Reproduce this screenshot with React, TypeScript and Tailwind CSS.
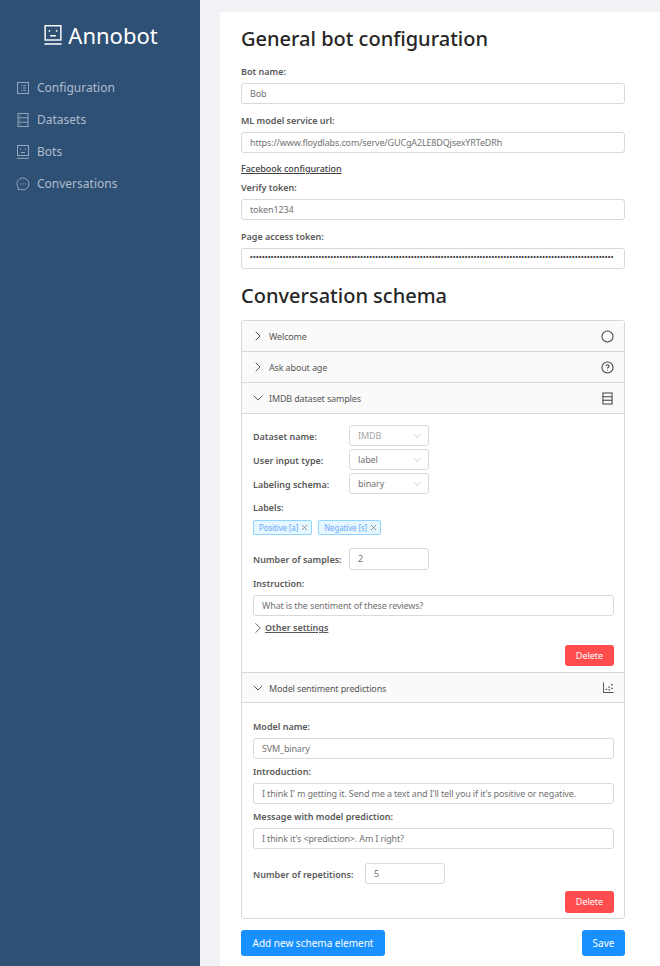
import { ReactNode } from 'react';
import { ChevronDown, ChevronRight, X } from 'lucide-react';

const font = `[font-family:'Noto_Sans',sans-serif]`;

const ConfigIcon = ({ className }: { className?: string }) => (
    <svg viewBox="0 0 14 14" fill="none" stroke="currentColor" strokeWidth="1" className={className}>
        <rect x="1.5" y="1.5" width="11" height="11" />
        <path d="M5 4.500h.8M5 7h.8M5 9.500h.8M7 4.500h3M7 7h3M7 9.500h3" />
    </svg>
);

const DatasetIcon = ({ className }: { className?: string }) => (
    <svg viewBox="0 0 14 14" fill="none" stroke="currentColor" strokeWidth="1" className={className}>
        <rect x="2" y="0.500" width="10" height="13" />
        <path d="M2 4.800h10M2 9.200h10M3.500 2.700h1M3.500 7h1M3.500 11.300h1" />
    </svg>
);

const BotIcon = ({ className }: { className?: string }) => (
    <svg viewBox="0 0 14 14" fill="none" stroke="currentColor" strokeWidth="1" className={className}>
        <rect x="1.500" y="0.500" width="11" height="10" />
        <path d="M1 13.300h12M5 7.500h4M4.500 3.500v1.200M9.500 3.500v1.200" />
    </svg>
);

const ChatIcon = ({ className }: { className?: string }) => (
    <svg viewBox="0 0 14 14" fill="none" stroke="currentColor" strokeWidth="1" className={className}>
        <path d="M7 1C3.700 1 1 3.500 1 6.800c0 1.500.5 2.800 1.400 3.800l-.4 2.400 2.500-.8c.8.4 1.600.6 2.500.6 3.300 0 6-2.700 6-6S10.300 1 7 1z" />
        <path d="M4.200 7h1M6.500 7h1M8.800 7h1" />
    </svg>
);

const HelpIcon = () => (
    <svg viewBox="0 0 14 14" fill="none" stroke="currentColor" strokeWidth="1.100" className="w-[13px] h-[13px]">
        <circle cx="7" cy="7" r="6" />
        <path d="M5.300 5.600C5.300 4.600 6 4 7 4s1.700.6 1.700 1.500c0 1.200-1.700 1.300-1.700 2.700M7 9.300v1" />
    </svg>
);

const RingIcon = () => (
    <svg viewBox="0 0 14 14" fill="none" stroke="currentColor" strokeWidth="1.100" className="w-[13px] h-[13px]">
        <circle cx="7" cy="7" r="6" />
    </svg>
);

const RowsIcon = () => (
    <svg viewBox="0 0 12 14" fill="none" stroke="currentColor" strokeWidth="1.100" className="w-[11px] h-[13px] mr-[1px]">
        <rect x="1" y="1" width="10" height="12" />
        <path d="M1 5h10M1 9h10" />
    </svg>
);

const ScatterIcon = () => (
    <svg viewBox="0 0 12 12" fill="none" stroke="currentColor" strokeWidth="1" className="w-[11px] h-[11px]">
        <path d="M.5 .5v11h11" />
        <path d="M3 8h1.500M6 5.500h1.500M6 8.500h1.500M9 3h1.500M9 7h1.500" strokeWidth="1.400" />
    </svg>
);

const Field = ({ value, className = 'text-[9px] tracking-[-0.15px]' }: { value: string; className?: string }) => (
    <div
        className={`h-[21px] px-2 flex items-center bg-white border border-[#d9d9d9] rounded-[3px] text-[#737373] whitespace-nowrap overflow-hidden ${className}`}
    >
        {value}
    </div>
);

// taller line box with a negative margin: the text sits 1px lower without changing the flow height
const Label = ({ children, className = '' }: { children: ReactNode; className?: string }) => (
    <div className={`text-[9px] leading-[16px] -mb-[2px] font-semibold text-[#595959] whitespace-nowrap ${className}`}>{children}</div>
);

const Select = ({ value, dim }: { value: string; dim?: boolean }) => (
    <div className="w-20 h-[21px] pl-2 pr-[5px] flex items-center justify-between border border-[#d9d9d9] rounded-[3px] text-[9px] tracking-[-0.1px]">
        <span className={dim ? 'text-[#a6a6a6]' : 'text-[#737373]'}>{value}</span>
        <ChevronDown className="w-3 h-3 text-[#bfbfbf]" strokeWidth={1.5} />
    </div>
);

const InlineRow = ({ label, children, className = '' }: { label: string; children: ReactNode; className?: string }) => (
    <div className={`flex items-center justify-between ${className}`}>
        <Label>{label}</Label>
        {children}
    </div>
);

const Header = ({
    title,
    open,
    icon,
    className = '',
}: {
    title: string;
    open?: boolean;
    icon: ReactNode;
    className?: string;
}) => (
    <div className={`h-[31px] flex items-center pl-[8px] pr-[10px] bg-[#fafafa] border-b border-[#d9d9d9] ${className}`}>
        {open ? (
            <ChevronDown className="w-4 h-4 text-[#595959]" strokeWidth={1.5} />
        ) : (
            <ChevronRight className="w-4 h-4 text-[#595959]" strokeWidth={1.5} />
        )}
        <span className="ml-[3px] pt-[2px] text-[9px] tracking-[-0.15px] text-[#595959]">{title}</span>
        <span className="ml-auto text-[#3f3f3f] flex">{icon}</span>
    </div>
);

const Tag = ({ text }: { text: string }) => (
    <span className="h-[15px] pl-[5px] pr-[2px] flex items-center gap-[2px] bg-[#e6f7ff] border border-[#91d5ff] rounded-[2px] text-[8px] tracking-[-0.15px] text-[#6fa8ff]">
        {text}
        <X className="w-[9px] h-[9px] text-[#777777]" strokeWidth={2} />
    </span>
);

const DeleteButton = ({ className = '' }: { className?: string }) => (
    <div className={`flex justify-end ${className}`}>
        <button className="w-[49px] h-full bg-[#ff4d4f] rounded-[3px] text-[9px] text-white">Delete</button>
    </div>
);

const navItems = [
    { text: 'Configuration', icon: ConfigIcon },
    { text: 'Datasets', icon: DatasetIcon },
    { text: 'Bots', icon: BotIcon },
    { text: 'Conversations', icon: ChatIcon },
];

export default function App() {
    return (
        <div className={`${font} h-[966px] overflow-hidden flex bg-[#f0f2f5]`}>
            <aside className="w-[200px] shrink-0 bg-[#2e5075]">
                <div className="pt-[19px] h-[72px] flex justify-center items-start gap-[5px] text-white">
                    <BotIcon className="w-5 h-5 mt-[6px] ml-[1px]" />
                    <span className="text-[22px] leading-[32px] font-normal">Annobot</span>
                </div>
                <ul className="flex flex-col">
                    {navItems.map((el, i) => (
                        <li key={`sidebar-nav-${i}`} className="h-8 pl-4 flex items-center gap-[7px] text-[#aebccd] text-[12px]">
                            <el.icon className="w-[14px] h-[14px] opacity-80" />
                            {el.text}
                        </li>
                    ))}
                </ul>
            </aside>
            <main className="mt-3 ml-5 w-[440px] pl-[21px] pr-[35px] bg-white">
                <h1 className="mt-[13px] text-[20px] leading-[28px] font-medium text-[#262626]">General bot configuration</h1>
                <Label className="mt-[11px]">Bot name:</Label>
                <Field value="Bob" className="mt-[5px] text-[9px] tracking-[-0.15px]" />
                <Label className="mt-[9px]">ML model service url:</Label>
                <Field value="https://www.floydlabs.com/serve/GUCgA2LE8DQjsexYRTeDRh" className="mt-[5px] text-[9px] tracking-[-0.15px]" />
                <div className="mt-[9px] text-[9px] leading-[14px] font-medium tracking-[-0.05px] text-[#404040] underline">Facebook configuration</div>
                <Label className="mt-[4px]">Verify token:</Label>
                <Field value="token1234" className="mt-[5px] text-[9px] tracking-[-0.15px]" />
                <Label className="mt-[9px]">Page access token:</Label>
                <Field value={'•'.repeat(122)} className="mt-[5px] text-[7px] tracking-[0.35px] font-bold !text-[#404040]" />
                <h1 className="mt-[13px] text-[20px] leading-[28px] font-medium text-[#262626]">Conversation schema</h1>

                <div className="mt-[10px] h-[599px] border border-[#d9d9d9] rounded-[3px]">
                    <Header title="Welcome" icon={<RingIcon />} />
                    <Header title="Ask about age" icon={<HelpIcon />} />
                    <Header title="IMDB dataset samples" open icon={<RowsIcon />} />
                    <div className="pl-[11px] pr-[10px] pt-[11px] pb-[6px]">
                        <div className="flex flex-col gap-[3px]">
                            <InlineRow label="Dataset name:" className="w-[176px]">
                                <Select value="IMDB" dim />
                            </InlineRow>
                            <InlineRow label="User input type:" className="w-[176px]">
                                <Select value="label" />
                            </InlineRow>
                            <InlineRow label="Labeling schema:" className="w-[176px]">
                                <Select value="binary" />
                            </InlineRow>
                        </div>
                        <Label className="mt-[6px]">Labels:</Label>
                        <div className="mt-[6px] flex gap-[6px]">
                            <Tag text="Positive [a]" />
                            <Tag text="Negative [s]" />
                        </div>
                        <InlineRow label="Number of samples:" className="mt-[13px] w-[176px]">
                            <Field value="2" className="w-20 h-[22px] text-[9px]" />
                        </InlineRow>
                        <Label className="mt-[6px]">Instruction:</Label>
                        <Field value="What is the sentiment of these reviews?" className="mt-[5px] text-[9px] tracking-[-0.15px]" />
                        <div className="mt-[5px] h-[14px] flex items-center text-[9px] font-semibold text-[#595959]">
                            <ChevronRight className="w-[18px] h-[18px] -ml-[4px] -mr-[2px] shrink-0" strokeWidth={1.2} />
                            <span className="underline">Other settings</span>
                        </div>
                        <DeleteButton className="mt-[10px] h-[21px]" />
                    </div>
                    <Header title="Model sentiment predictions" open icon={<ScatterIcon />} className="border-t" />
                    <div className="pl-[11px] pr-[10px] pt-[16px]">
                        <Label>Model name:</Label>
                        <Field value="SVM_binary" className="mt-[5px] text-[9px] tracking-[-0.15px]" />
                        <Label className="mt-[5px]">Introduction:</Label>
                        <Field
                            value="I think I' m getting it. Send me a text and I'll tell you if it's positive or negative."
                            className="mt-[5px] text-[9px] tracking-[-0.15px]"
                        />
                        <Label className="mt-[5px]">Message with model prediction:</Label>
                        <Field value="I think it's <prediction>. Am I right?" className="mt-[5px] text-[9px] tracking-[-0.15px]" />
                        <InlineRow label="Number of repetitions:" className="mt-[14px] w-[192px]">
                            <Field value="5" className="w-20 text-[9px]" />
                        </InlineRow>
                        <DeleteButton className="mt-[7px] h-[22px]" />
                    </div>
                </div>

                <div className="mt-[11px] flex justify-between">
                    <button className="w-[144px] h-[26px] bg-[#1890ff] rounded-[3px] text-[10px] text-white">Add new schema element</button>
                    <button className="w-[43px] h-[26px] bg-[#1890ff] rounded-[3px] text-[10px] text-white">Save</button>
                </div>
            </main>
        </div>
    );
}
